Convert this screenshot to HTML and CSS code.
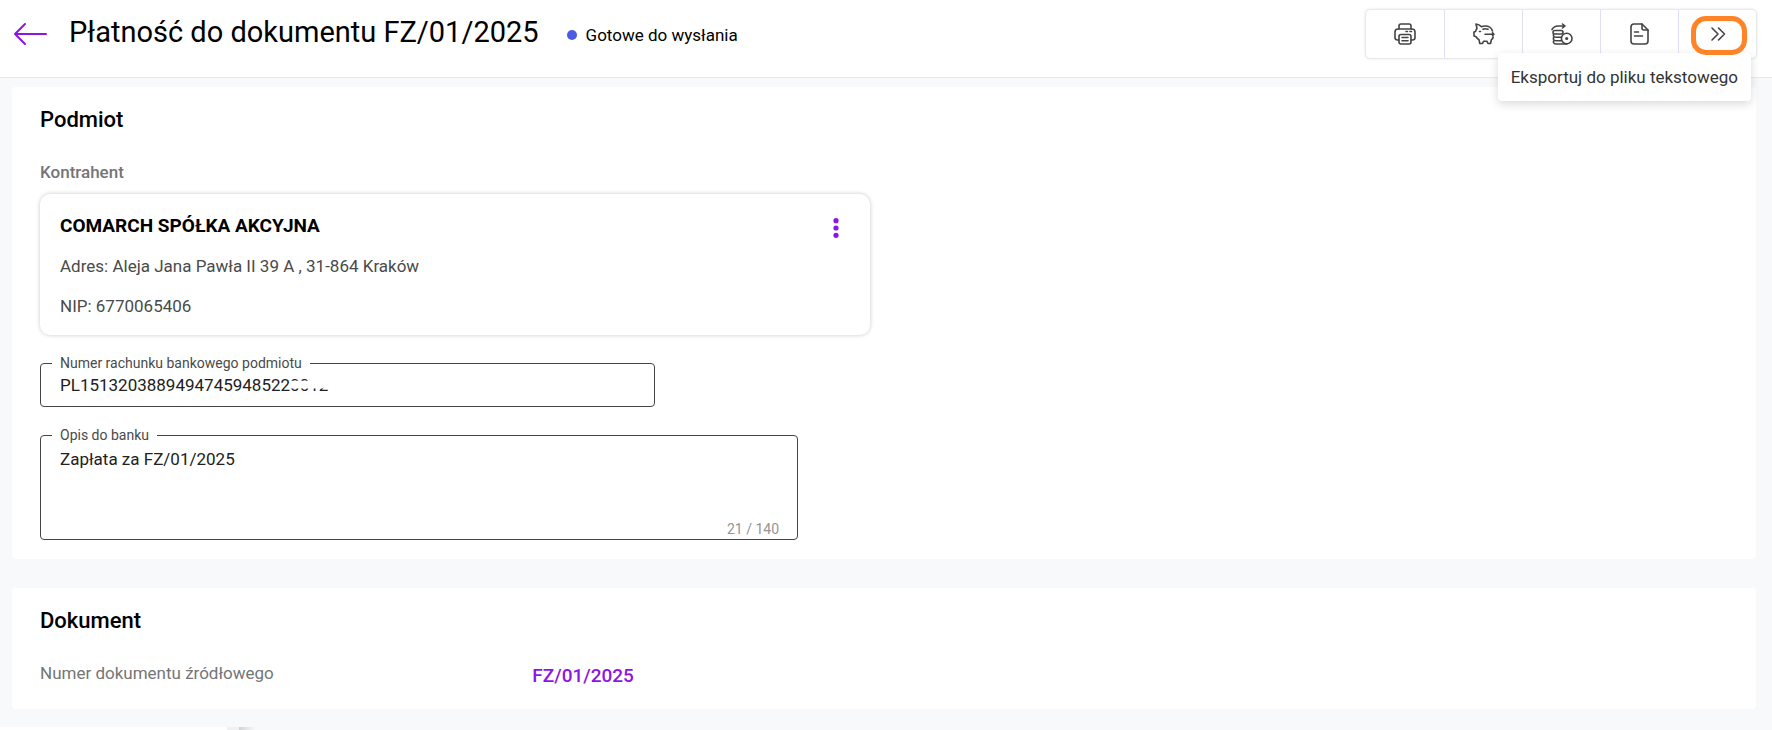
FILE: index.html
```html
<!DOCTYPE html>
<html lang="pl">
<head>
    <meta charset="utf-8">
    <title>Płatność do dokumentu FZ/01/2025</title>
    <link rel="stylesheet" href="styles.css">
</head>
<body>
    <header class="header">
        <button class="back" type="button" aria-label="Wstecz">
            <svg width="34" height="24" viewBox="0 0 34 24"><path d="M12 2 L2 12 L12 22 M2 12 H33"/></svg>
        </button>
        <h1>Płatność do dokumentu FZ/01/2025</h1>
        <div class="status"><span class="dot"></span>Gotowe do wysłania</div>

        <div class="toolbar">
            <button type="button" aria-label="Drukuj">
                <svg width="22" height="22" viewBox="0 0 22 22">
                    <path d="M5 6 V3 Q5 1 7 1 H15 Q17 1 17 3 V6"/>
                    <path d="M5 17 H3.500 Q1 17 1 14.500 V9 Q1 6 4 6 H18 Q21 6 21 9 V14.500 Q21 17 18.500 17 H17"/>
                    <rect x="5" y="11.500" width="12" height="9.500" rx="2"/>
                    <path d="M8 14.500 H14 M8 17.800 H14"/>
                    <path d="M12 8.500 H13.500 M16 8.500 H17.500"/>
                </svg>
            </button>
            <button type="button" aria-label="Zapłać">
                <svg width="22" height="22" viewBox="0 0 22 22">
                    <path d="M19.500 8 C18.500 4.500 15.500 3 12 3 C10.500 3 9.500 3.300 8.500 3.800 C7.500 2.500 5.500 1.500 3 1 L4 5.500 C3.300 6.400 2.800 7.400 2.500 8.500 L1 9 V13 L3 13.700 C3.700 15 4.700 16 6 16.800 L6.800 20.500 H9.500 L10.500 18.300 H14 L15 20.500 H17.500 L18.300 17 C19.300 16 20 15 20.200 14"/>
                    <path d="M10 6.300 Q12.500 5.300 15 6.300 M12 11.200 H21 M19.500 9.700 L21 11.200 L19.500 12.700"/>
                    <path d="M6.500 8.500 H7.500"/>
                </svg>
            </button>
            <button type="button" aria-label="Rozlicz">
                <svg width="22" height="22" viewBox="0 0 22 22">
                    <path d="M1 6.500 Q3 3 7 3 H14 M11.500 1 L14 3 L11.500 5"/>
                    <rect x="2" y="7.500" width="10" height="3.500" rx="1.700"/>
                    <path d="M2.500 11 V13 Q3 14.300 5 14.300 H10 M2.500 14.500 V16.500 Q3 17.700 5 17.700 H10 M2.500 18 V19.500 Q3 21 5 21 H16"/>
                    <circle cx="15.700" cy="15.500" r="5.300"/>
                    <circle cx="15.700" cy="15.500" r=".8"/>
                </svg>
            </button>
            <button type="button" aria-label="Dokument">
                <svg width="22" height="22" viewBox="0 0 22 22">
                    <path d="M13 1 H5 Q2 1 2 4 V18 Q2 21 5 21 H16 Q19 21 19 18 V7 Z"/>
                    <path d="M13 1 V5 Q13 7 15 7 H19 M5.500 9 H9.500 M5.500 13 H13.500"/>
                </svg>
            </button>
            <button class="more" type="button" aria-describedby="tip" aria-label="Więcej">
                <svg width="22" height="22" viewBox="0 0 22 22"><path d="M5 5 L11 11 L5 17 M11.500 5 L17.500 11 L11.500 17"/></svg>
            </button>
            <div class="tooltip" id="tip" role="tooltip">Eksportuj do pliku tekstowego</div>
        </div>
    </header>

    <main>
        <section class="panel">
            <h2>Podmiot</h2>
            <h3>Kontrahent</h3>
            <div class="contractor">
                <div class="contractor-info">
                    <strong>COMARCH SPÓŁKA AKCYJNA</strong>
                    <p>Adres: Aleja Jana Pawła II 39 A , 31-864 Kraków</p>
                    <p>NIP: 6770065406</p>
                </div>
                <button class="menu" type="button" aria-label="Menu">
                    <svg width="6" height="20" viewBox="0 0 6 20"><circle cx="3" cy="2.700" r="2.600"/><circle cx="3" cy="10" r="2.600"/><circle cx="3" cy="17.300" r="2.600"/></svg>
                </button>
            </div>

            <div class="field account">
                <label for="account">Numer rachunku bankowego podmiotu</label>
                <input type="text" id="account" value="PL15132038894947459485220012">
                <span class="mask"></span>
            </div>

            <div class="field description">
                <label for="description">Opis do banku</label>
                <textarea id="description" maxlength="140">Zapłata za FZ/01/2025</textarea>
                <span class="counter">21 / 140</span>
            </div>
        </section>

        <section class="panel">
            <h2>Dokument</h2>
            <div class="row">
                <span>Numer dokumentu źródłowego</span>
                <a href="#">FZ/01/2025</a>
            </div>
        </section>
    </main>

    <footer class="bottom"><div class="bottom-left"></div><div class="bottom-edge"></div><div class="bottom-shadow"></div></footer>
</body>
</html>
```

FILE: styles.css
```css
*, *::after { box-sizing: border-box; }
body { margin: 0; background: #f8f9fb; font-family: Roboto, sans-serif; font-size: 17px; line-height: 24px; color: #000; }
h1, h2, h3, p { margin: 0; }
button { padding: 0; border: none; background: none; cursor: pointer; }
svg { display: block; fill: none; stroke-linecap: round; stroke-linejoin: round; }

.header { display: flex; align-items: flex-start; padding: 10px 16px 19px 13px; background: #fff; border-bottom: 1px solid #e8e8e8; }
.back { margin-top: 12px; }
.back svg { stroke: #9013e5; stroke-width: 2; }
h1 { margin-left: 22px; font-size: 29px; line-height: 44px; font-weight: 400; }
.status { display: flex; align-items: center; gap: 9px; margin: 13px 0 0 28px; }
.dot { width: 10px; height: 10px; border-radius: 50%; background: #4b5ce0; }

.toolbar { position: relative; display: flex; margin-left: auto; height: 48px; border-radius: 4px; background: #fff; box-shadow: 0 0 3px rgba(0, 0, 0, 0.25); }
.toolbar button { display: flex; align-items: center; justify-content: center; width: 78px; }
.toolbar button + button { border-left: 1px solid #e0dff5; }
.toolbar svg { stroke: #444; stroke-width: 1.6; }
.more { position: relative; }
.more::after { content: ""; position: absolute; z-index: 2; top: 6px; right: 9px; width: 56px; height: 39px; border: 5px solid #ff8427; border-radius: 15px; }
.tooltip { position: absolute; z-index: 1; top: 43px; right: 5px; padding: 12px 13px; border-radius: 4px; background: #fff; color: #333; white-space: nowrap; box-shadow: 0 3px 10px rgba(0, 0, 0, 0.15); }

main { display: grid; gap: 29px; padding: 9px 16px 18px 12px; }
.panel { padding: 19px 28px; border-radius: 4px; background: #fff; }
h2 { font-size: 22px; line-height: 28px; font-weight: 500; }
h3 { margin: 26px 0 10px; font-size: 17px; font-weight: 500; color: #757575; }

.contractor { display: flex; justify-content: space-between; align-items: flex-start; max-width: 830px; padding: 20px 31px 17px 20px; border-radius: 10px; box-shadow: 0 0 4px rgba(0, 0, 0, 0.22); }
.contractor-info { display: grid; gap: 16px; color: #4a4a4a; }
.contractor strong { font-size: 19px; color: #000; }
.menu { margin-top: 4px; }
.menu svg { fill: #9013e5; }

.field { position: relative; margin-top: 28px; }
.field label { position: absolute; top: -10px; left: 12px; padding: 0 8px; background: #fff; font-size: 14px; line-height: 20px; color: #4a4a4a; }
.field input, .field textarea { display: block; width: 100%; padding: 0 19px; border: 1px solid #444; border-radius: 4px; background: #fff; font: inherit; color: #212121; resize: none; outline: none; }
.field input { height: 44px; }
.field textarea { height: 105px; padding-top: 11px; }
.account { max-width: 615px; }
.description { max-width: 758px; }
.counter { position: absolute; right: 19px; bottom: 1px; font-size: 14px; line-height: 20px; color: #949494; }
/* hides the end of the account number */
.mask { position: absolute; top: 14px; left: 250px; width: 41px; height: 13px; background: #fff; clip-path: polygon(0 28%, 50% 28%, 50% 0, 100% 0, 100% 60%, 78% 88%, 0 88%); }

.row { display: grid; grid-template-columns: 7fr 17fr; margin-top: 26px; color: #757575; }
.row a { font-size: 19px; line-height: 29px; font-weight: 500; color: #9013e5; text-decoration: none; }

.bottom { display: flex; height: 3px; }
.bottom-left { width: 227px; background: #fff; }
.bottom-edge { width: 12px; background: #f1f1f1; }
.bottom-shadow { width: 16px; background: linear-gradient(to right, #d2d2d2, #f8f9fb); }
```
